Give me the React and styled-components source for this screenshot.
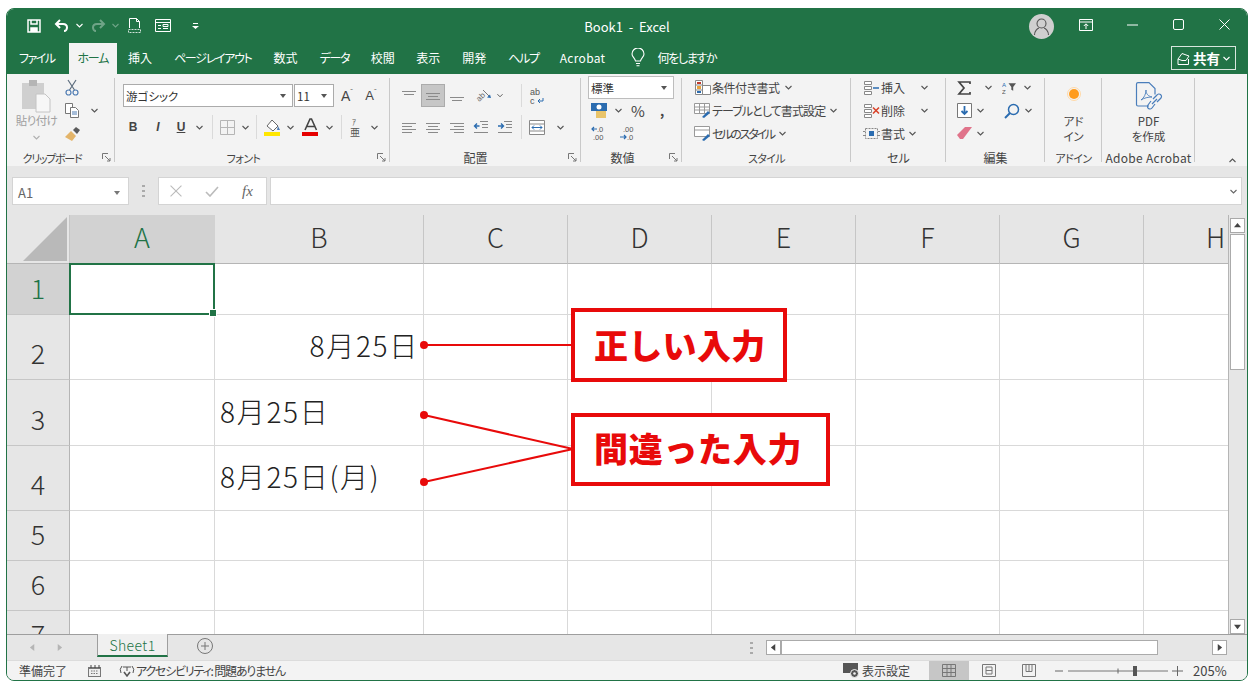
import React from 'react'
import styled, { createGlobalStyle } from 'styled-components'

const GREEN = '#217346'
const RED = '#e80a0a'

const Global = createGlobalStyle`
  html, body { margin: 0; padding: 0; background: #fff; }
  body {
    font-family: "Noto Sans CJK JP", "Liberation Sans", sans-serif;
    font-feature-settings: "palt";
    color: #444;
    overflow: hidden;
  }
  * { box-sizing: border-box; }
`

const Window = styled.div`
  margin: 8px 0 0 6px;
  width: 1242px;
  height: 673px;
  border: 1px solid ${GREEN};
  border-radius: 8px;
  overflow: hidden;
  display: flex;
  flex-direction: column;
  background: #e6e6e6;
`

/* title bar */
const TitleBar = styled.div`
  height: 33px;
  flex: none;
  background: ${GREEN};
  display: flex;
  align-items: center;
  color: #fff;
  position: relative;
`
const Qat = styled.div`
  display: flex;
  align-items: center;
  padding-left: 19px;
`
const QatBtn = styled.span`
  width: ${p => p.$w}px;
  margin-left: ${p => p.$ml ?? 0}px;
  display: flex;
  justify-content: center;
  align-items: center;
  opacity: ${p => (p.$dim ? 0.35 : 1)};
`
const Title = styled.div`
  position: absolute;
  left: 0;
  right: 0;
  top: 9px;
  text-align: center;
  font-size: 13px;
  line-height: 18px;
  white-space: pre;
`
const WinControls = styled.div`
  margin-left: auto;
  display: flex;
  align-items: center;
`
const Avatar = styled.span`
  width: 25px;
  height: 25px;
  border-radius: 50%;
  background: #cfcfcf;
  display: flex;
  align-items: center;
  justify-content: center;
  margin-right: 9px;
  margin-top: 2px;
`
const WinBtn = styled.span`
  width: 46px;
  display: flex;
  justify-content: center;
  margin-top: -2px;
`

/* tabs */
const TabRow = styled.div`
  height: 32px;
  flex: none;
  background: ${GREEN};
  display: flex;
  align-items: flex-end;
  padding-left: 1px;
  position: relative;
`
const Tab = styled.div`
  height: 31px;
  padding: 0 ${p => p.$pad ?? 11}px 2px;
  display: flex;
  align-items: center;
  font-size: 12px;
  letter-spacing: ${p => p.$ls ?? 0}px;
  white-space: nowrap;
  color: ${p => (p.$active ? GREEN : '#fff')};
  background: ${p => (p.$active ? '#f3f3f3' : 'transparent')};
  margin-left: ${p => p.$ml ?? 0}px;
`
const TellMe = styled.div`
  display: flex;
  align-items: center;
  gap: 12px;
  color: #fff;
  font-size: 12px;
  letter-spacing: -1.3px;
  height: 31px;
  padding-bottom: 2px;
  margin-left: 16px;
`
const Share = styled.div`
  position: absolute;
  left: 1164px;
  top: 4px;
  width: 65px;
  height: 24px;
  border: 1px solid #d8e6de;
  color: #fff;
  display: flex;
  align-items: center;
  justify-content: center;
  gap: 3px;
  font-size: 13.5px;
  font-weight: 700;
`

/* ribbon */
const Ribbon = styled.div`
  height: 92px;
  flex: none;
  background: #f3f3f3;
  display: flex;
  padding-top: 2px;
  position: relative;
`
const Group = styled.div`
  width: ${p => p.$w}px;
  height: 90px;
  flex: none;
  display: flex;
  flex-direction: column;
  position: relative;
  &::after {
    content: '';
    position: absolute;
    right: 0;
    top: 2px;
    height: 84px;
    width: 1px;
    background: #c9c9c9;
  }
`
const GroupBody = styled.div`
  height: 75px;
  display: flex;
  flex-direction: ${p => (p.$row ? 'row' : 'column')};
  padding-left: ${p => p.$pl ?? 0}px;
  padding-top: ${p => p.$pt ?? 0}px;
`
const GroupLabel = styled.div`
  height: 14px;
  line-height: 14px;
  font-size: ${p => p.$fs ?? 12}px;
  letter-spacing: ${p => p.$ls ?? 0}px;
  text-align: center;
  color: #444;
  padding-right: ${p => p.$pr ?? 0}px;
  white-space: nowrap;
`
const Launcher = styled.span`
  position: absolute;
  right: 4px;
  bottom: 4px;
  display: flex;
`
const Row = styled.div`
  height: ${p => p.$h ?? 23}px;
  display: flex;
  align-items: center;
  margin-top: ${p => p.$mt ?? 0}px;
`
const Slot = styled.span`
  width: ${p => p.$w}px;
  height: ${p => (p.$h ? p.$h + 'px' : 'auto')};
  margin-left: ${p => p.$ml ?? 0}px;
  flex: none;
  display: flex;
  align-items: center;
  justify-content: center;
  font-size: ${p => p.$fs ?? 12}px;
  font-weight: ${p => p.$fw ?? 400};
  font-style: ${p => (p.$it ? 'italic' : 'normal')};
  text-decoration: ${p => (p.$un ? 'underline' : 'none')};
  font-family: ${p => (p.$latin ? '"Liberation Sans", sans-serif' : 'inherit')};
  color: #444;
  background: ${p => (p.$on ? '#c6c6c6' : 'transparent')};
  border: ${p => (p.$on ? '1px solid #ababab' : 'none')};
`
const Caret = styled.sup`
  font-size: 8px;
  line-height: 8px;
  align-self: flex-start;
  color: #666;
`
const Divider = styled.span`
  width: ${p => p.$w}px;
  margin-left: ${p => p.$ml ?? 0}px;
  flex: none;
  align-self: stretch;
  display: flex;
  justify-content: center;
  &::before { content: ''; width: 1px; background: #dadada; }
`
const Select = styled.div`
  width: ${p => p.$w}px;
  height: 23px;
  flex: none;
  background: #fff;
  border: 1px solid ${p => (p.$strong ? '#bdbdbd' : '#ababab')};
  display: flex;
  align-items: center;
  justify-content: space-between;
  padding: 0 6px 0 2px;
  font-size: 11.5px;
  color: #333;
  margin-right: ${p => p.$mr ?? 0}px;
`
const ListRow = styled.div`
  height: 23px;
  display: flex;
  align-items: center;
  font-size: 12px;
  letter-spacing: ${p => p.$ls ?? 0}px;
  white-space: nowrap;
  color: #444;
`
const ListIcon = styled.span`
  width: 19px;
  display: flex;
  justify-content: center;
  flex: none;
`
const ListGap = styled.span`
  margin-left: ${p => p.$w ?? 5}px;
  display: flex;
`
const PasteCol = styled.div`
  width: 49px;
  display: flex;
  flex-direction: column;
  align-items: center;
  padding-top: 4px;
  font-size: 11.5px;
  letter-spacing: -0.6px;
  color: #a0a0a0;
  line-height: 14px;
`
const PasteLabel = styled.span`
  margin-top: -1px;
  margin-bottom: 8px;
`
const SmallCol = styled.div`
  width: 24px;
  display: flex;
  flex-direction: column;
`
const BigButton = styled.div`
  flex: 1;
  display: flex;
  flex-direction: column;
  align-items: center;
  padding-top: ${p => p.$pt}px;
  font-size: 11.5px;
  line-height: 15px;
  color: #444;
  text-align: center;
`
const BigIcon = styled.span`
  height: ${p => p.$h}px;
  margin-bottom: ${p => p.$mb}px;
  display: flex;
  align-items: center;
`
const Collapse = styled.span`
  position: absolute;
  left: 1222px;
  top: 84px;
  display: flex;
`

/* formula bar */
const FormulaBar = styled.div`
  height: 49px;
  flex: none;
  background: #e6e6e6;
  padding: 11px 5px 10px 5px;
  display: flex;
  align-items: stretch;
`
const NameBox = styled.div`
  width: 117px;
  background: #fff;
  border: 1px solid #d4d4d4;
  display: flex;
  align-items: center;
  justify-content: space-between;
  padding: 3px 8px 0 5px;
  font-size: 13px;
  color: #666;
`
const Grip = styled.div`
  width: 29px;
  display: flex;
  justify-content: center;
  align-items: center;
`
const FxBox = styled.div`
  width: 109px;
  background: #fff;
  border: 1px solid #d4d4d4;
  display: flex;
  align-items: center;
  gap: 23px;
  padding-left: 11px;
  margin-right: 3px;
  font-family: "Liberation Serif", serif;
  font-style: italic;
  font-size: 15px;
  color: #666;
`
const Input = styled.div`
  flex: 1;
  background: #fff;
  border: 1px solid #d4d4d4;
  display: flex;
  align-items: center;
  justify-content: flex-end;
  padding-right: 4px;
`

/* sheet */
const SheetArea = styled.div`
  height: 419px;
  flex: none;
  display: flex;
  background: #fff;
`
const Sheet = styled.div`
  width: 1221px;
  position: relative;
  overflow: hidden;
  flex: none;
`
const CellGrid = styled.div`
  display: grid;
  grid-template-columns: 63px 145px 209px repeat(6, 144px);
  grid-template-rows: 49px 51px 65px 66px 65px 50px 50px 50px;
  font-size: 27px;
`
const Corner = styled.div`
  background: #e6e6e6;
  border-right: 1px solid #c6c6c6;
  border-bottom: 1px solid #b5b5b5;
  display: flex;
  align-items: flex-end;
  justify-content: flex-end;
  padding: 0 2px 2px 0;
`
const ColHead = styled.div`
  background: ${p => (p.$on ? '#d2d2d2' : '#e6e6e6')};
  color: ${p => (p.$on ? GREEN : '#333')};
  border-right: 1px solid ${p => (p.$on ? '#d2d2d2' : '#c6c6c6')};
  border-bottom: 1px solid ${p => (p.$on ? GREEN : '#b5b5b5')};
  display: flex;
  align-items: center;
  justify-content: center;
  font-weight: 300;
  padding-bottom: 6px;
`
const RowHead = styled.div`
  background: ${p => (p.$on ? '#d2d2d2' : '#e6e6e6')};
  color: ${p => (p.$on ? GREEN : '#333')};
  border-right: 1px solid #b5b5b5;
  border-bottom: 1px solid #c6c6c6;
  display: flex;
  align-items: center;
  justify-content: center;
  font-weight: 300;
  padding-top: ${p => (p.$tall ? 11 : 0)}px;
  padding-bottom: ${p => (p.$tall ? 0 : 4)}px;
`
const Cell = styled.div`
  border-right: 1px solid #d9d9d9;
  border-bottom: 1px solid #d9d9d9;
  display: flex;
  align-items: center;
  justify-content: ${p => (p.$right ? 'flex-end' : 'flex-start')};
  padding: 0 4px 4px 5px;
  font-size: 28px;
  font-weight: 300;
  letter-spacing: 1.7px;
  font-feature-settings: normal;
  color: #222;
  white-space: nowrap;
  position: relative;
`
const Selected = styled.div`
  position: absolute;
  left: -1px;
  top: -1px;
  right: -1px;
  bottom: -1px;
  border: 2px solid ${GREEN};
  z-index: 2;
  &::after {
    content: '';
    position: absolute;
    right: -4px;
    bottom: -4px;
    width: 6px;
    height: 6px;
    background: ${GREEN};
    border: 1px solid #fff;
  }
`
const Leader = styled.svg`
  position: absolute;
  left: 0;
  top: 0;
  z-index: 3;
`
const Callout = styled.div`
  position: absolute;
  left: 564px;
  top: ${p => p.$top}px;
  width: ${p => p.$w}px;
  height: ${p => p.$h}px;
  background: #fff;
  border: 4px solid ${RED};
  z-index: 4;
  display: flex;
  align-items: center;
  padding: 0 0 ${p => p.$pb}px 19px;
  color: ${RED};
  font-size: 34px;
  font-weight: 900;
  letter-spacing: ${p => p.$ls}px;
  font-feature-settings: normal;
  white-space: nowrap;
`

const VScroll = styled.div`
  width: 19px;
  flex: none;
  background: #e6e6e6;
  border-left: 1px solid #b5b5b5;
  padding: 3px 2px 0 1px;
  display: flex;
  flex-direction: column;
  justify-content: flex-start;
`
const ScrollBtn = styled.div`
  width: 15px;
  height: 15px;
  flex: none;
  background: #fff;
  border: 1px solid #a9a9a9;
  display: flex;
  align-items: center;
  justify-content: center;
  margin-top: ${p => p.$mt ?? 0}px;
`
const VThumb = styled.div`
  height: 136px;
  width: 15px;
  margin-top: 1px;
  background: #fff;
  border: 1px solid #ababab;
`

/* sheet tabs */
const SheetTabs = styled.div`
  height: 26px;
  flex: none;
  background: #e6e6e6;
  border-top: 1px solid #9e9e9e;
  display: flex;
  align-items: flex-start;
  position: relative;
`
const Nav = styled.div`
  width: 90px;
  height: 25px;
  display: flex;
  align-items: center;
  padding-left: 22px;
  gap: 20px;
`
const SheetTab = styled.div`
  width: 71px;
  height: 23px;
  margin-top: -1px;
  background: #f0f0f0;
  border-left: 1px solid #9e9e9e;
  border-right: 1px solid #9e9e9e;
  border-bottom: 2px solid ${GREEN};
  color: ${GREEN};
  font-size: 14px;
  font-weight: 300;
  display: flex;
  align-items: center;
  justify-content: center;
  letter-spacing: 0.4px;
`
const AddSheet = styled.span`
  margin-left: 29px;
  margin-top: 3px;
  display: flex;
`
const HScrollWrap = styled.div`
  margin-left: auto;
  display: flex;
  align-items: center;
  height: 25px;
  padding-right: 20px;
`
const HTrack = styled.div`
  width: 431px;
  height: 15px;
  background: #e6e6e6;
  display: flex;
`
const HThumb = styled.div`
  width: 377px;
  height: 15px;
  background: #fff;
  border: 1px solid #ababab;
`
const HGrip = styled.span`
  display: flex;
  margin-right: 13px;
`

/* status bar */
const StatusBar = styled.div`
  flex: 1;
  background: #f3f3f3;
  display: flex;
  align-items: center;
  font-size: 12px;
  color: #444;
  border-top: 1px solid #dcdcdc;
  white-space: nowrap;
`
const StatusText = styled.span`
  margin-left: ${p => p.$ml}px;
  letter-spacing: ${p => p.$ls ?? 0}px;
  display: flex;
  align-items: center;
`
const StatusRight = styled.div`
  margin-left: auto;
  display: flex;
  align-items: stretch;
  height: 100%;
`
const ViewBtn = styled.span`
  width: 40px;
  background: ${p => (p.$on ? '#c6c6c6' : 'transparent')};
  display: flex;
  align-items: center;
  justify-content: center;
`
const DisplaySet = styled.span`
  display: flex;
  align-items: center;
  gap: 2px;
  margin-right: 19px;
`
const Zoom = styled.div`
  display: flex;
  align-items: center;
  padding-left: 6px;
  padding-right: 20px;
`
const Pct = styled.span`
  width: 34px;
  margin-left: 9px;
  font-size: 13px;
`

/* icons */
const Chev = ({ c = '#555', up }) => (
  <svg width="7" height="5" viewBox="0 0 7 5">
    <path d={up ? 'M.5 4 3.5 1 6.5 4' : 'M.5 1 3.5 4 6.5 1'} fill="none" stroke={c} strokeWidth="1.1" />
  </svg>
)
const Tri = ({ c = '#555' }) => (
  <svg width="6" height="4" viewBox="0 0 6 4"><path d="M0 0H6L3 4Z" fill={c} /></svg>
)
const LaunchIcon = () => (
  <svg width="9" height="9" viewBox="0 0 9 9" fill="none" stroke="#777">
    <path d="M.5 6V.5H6" /><path d="M3 3 8 8M8 5V8H5" />
  </svg>
)
const Lines = ({ rows, align = 'c' }) => (
  <svg width="16" height="14" viewBox="0 0 16 14" stroke="#8a8a8a">
    {rows.map((r, i) => {
      const w = i % 2 === 0 ? 14 : 10
      const x = align === 'l' ? 1 : align === 'r' ? 15 - w : 8 - w / 2
      return <path key={i} d={`M${x} ${r}.5h${w}`} />
    })}
  </svg>
)
const IndentIcon = ({ right }) => (
  <svg width="16" height="14" viewBox="0 0 16 14" fill="none">
    <path d="M7 1.500h8M9 4.500h6M9 7.500h6M1 12.500h14" stroke="#888" />
    <path d={right ? 'M1 6h5M4 3.500 6.500 6 4 8.500' : 'M6.500 6h-5M4 3.500 1.500 6 4 8.500'} stroke="#2b6cb0" strokeWidth="1.400" />
  </svg>
)
const SaveIcon = () => (
  <svg width="14" height="14" viewBox="0 0 14 14" fill="none" stroke="#fff" strokeWidth="1.500">
    <path d="M1 1h12v12H1z" /><path d="M4 1v4h6V1" /><path d="M4 13V9h6v4" fill="#fff" />
  </svg>
)
const UndoIcon = () => (
  <svg width="15" height="13" viewBox="0 0 15 13" fill="none" stroke="#fff" strokeWidth="2">
    <path d="M6 1 2 5l4 4" /><path d="M2 5h7c3 0 4 2 4 3.500S12 12 10 12" />
  </svg>
)
const RedoIcon = () => (
  <svg width="15" height="13" viewBox="0 0 15 13" fill="none" stroke="#fff" strokeWidth="2">
    <path d="M9 1l4 4-4 4" /><path d="M13 5H6C3 5 2 7 2 8.500S3 12 5 12" />
  </svg>
)
const PreviewIcon = () => (
  <svg width="13" height="15" viewBox="0 0 13 15" fill="none" stroke="#fff">
    <path d="M1.500 10V.5h7l3 3V10" /><path d="M8.500.5v3h3" /><path d="M.5 11.500h12v3H.5z" strokeWidth=".8" strokeDasharray="2 1" />
  </svg>
)
const FormIcon = () => (
  <svg width="16" height="13" viewBox="0 0 16 13" fill="none" stroke="#fff">
    <path d="M.5.5h15v12H.5z" /><path d="M.5 3.500h15M3 6.500h3M8 5.500h5v2H8zM3 9.500h3M8 9.500h5" />
  </svg>
)
const CustomIcon = () => (
  <svg width="7" height="6" viewBox="0 0 7 6" fill="#fff"><path d="M1 0h5v1H1zM0 3h7L3.500 6z" /></svg>
)
const PersonIcon = () => (
  <svg width="19" height="19" viewBox="0 0 19 19" fill="none" stroke="#555" strokeWidth="1.100">
    <circle cx="9.500" cy="6.500" r="4.500" /><path d="M2.500 18c0-4 3-6.500 4.500-7M16.500 18c0-4-3-6.500-4.500-7" />
  </svg>
)
const DisplayIcon = () => (
  <svg width="14" height="12" viewBox="0 0 14 12" fill="none" stroke="#fff">
    <path d="M.5.5h13v11H.5zM.5 3h13" /><path d="M7 10V5M4.800 7 7 4.800 9.200 7" />
  </svg>
)
const MinIcon = () => <svg width="11" height="2" viewBox="0 0 11 2"><path d="M0 1h11" stroke="#fff" /></svg>
const MaxIcon = () => (
  <svg width="11" height="11" viewBox="0 0 11 11"><rect x=".5" y=".5" width="10" height="10" rx="1.500" fill="none" stroke="#fff" /></svg>
)
const CloseIcon = ({ c = '#fff', s = 11 }) => (
  <svg width={s} height={s} viewBox="0 0 11 11"><path d="M.5.5l10 10M10.500.5l-10 10" stroke={c} strokeWidth="1" /></svg>
)
const BulbIcon = () => (
  <svg width="14" height="19" viewBox="0 0 14 19" fill="none" stroke="#fff" strokeWidth="1.100">
    <path d="M4.500 13C4 10 1 9 1 6a6 6 0 0 1 12 0c0 3-3 4-3.500 7z" /><path d="M5 15.500h4M5.500 17.800h3" />
  </svg>
)
const ShareIcon = () => (
  <svg width="13" height="13" viewBox="0 0 13 13" fill="none" stroke="#fff">
    <path d="M1 7v5.500h10.500V7" /><path d="M1 7 5 1.500l7 2.500-3 4.500H5z" />
  </svg>
)
const PasteIcon = () => (
  <svg width="30" height="34" viewBox="0 0 30 34">
    <rect x="0" y="3" width="22" height="26" fill="#cfcfcf" />
    <rect x="7" y="0" width="8" height="6" fill="#b5b5b5" />
    <path d="M14 14h9l5 5v13H14z" fill="#f7f7f7" stroke="#c4c4c4" />
  </svg>
)
const CutIcon = () => (
  <svg width="14" height="17" viewBox="0 0 14 17" fill="none" stroke="#5d6d7e" strokeWidth="1.200">
    <circle cx="3.500" cy="13.500" r="2.500" stroke="#4f7cb3" /><circle cx="10.500" cy="13.500" r="2.500" stroke="#4f7cb3" />
    <path d="M4.500 11 11 1M9.500 11 3 1" />
  </svg>
)
const CopyIcon = () => (
  <svg width="14" height="15" viewBox="0 0 14 15" fill="#fff" stroke="#777">
    <path d="M.5.5h7v10h-7z" /><path d="M5.500 4.500h5l3 3v7h-8z" /><path d="M7 9h5M7 11h5" stroke="#4f7cb3" />
  </svg>
)
const PainterIcon = () => (
  <svg width="15" height="14" viewBox="0 0 15 14">
    <path d="M0 10 6 4l5 5-4 5z" fill="#e3b469" /><path d="M8 3l3-3 4 3-3 4z" fill="#5a5a5a" />
  </svg>
)
const BorderIcon = () => (
  <svg width="15" height="15" viewBox="0 0 15 15" fill="none" stroke="#b5b5b5">
    <path d="M.5.5h14v14H.5zM7.500.5v14M.5 7.500h14" />
  </svg>
)
const FillIcon = () => (
  <svg width="17" height="18" viewBox="0 0 17 18">
    <path d="M3 8 8 2l6 6-5 5z" fill="#fff" stroke="#666" /><path d="M14 8l2 4h-3z" fill="#4f7cb3" />
    <rect y="14" width="16" height="4" fill="#ffe600" />
  </svg>
)
const FontColorIcon = () => (
  <svg width="17" height="18" viewBox="0 0 17 18">
    <path d="M3 12 8 1h1.500l5 11M5 8.500h7.500" fill="none" stroke="#444" strokeWidth="1.600" />
    <rect y="14" width="16" height="4" fill="#e60000" />
  </svg>
)
const PhoneticIcon = () => (
  <svg width="12" height="20" viewBox="0 0 12 20" fill="#555">
    <text x="3" y="8" fontSize="8">ｱ</text>
    <text x="1" y="19" fontSize="10">亜</text>
  </svg>
)
const OrientIcon = () => (
  <svg width="20" height="18" viewBox="0 0 20 18">
    <text x="3" y="13" fontSize="8" fill="#666" transform="rotate(-45 7 10)" fontFamily="Liberation Sans">ab</text>
    <path d="M10 3l6 6" stroke="#777" fill="none" />
    <path d="M18 11l-4-.5 3-3z" fill="#2b6cb0" />
  </svg>
)
const WrapIcon = () => (
  <svg width="16" height="18" viewBox="0 0 16 18">
    <text x="1" y="8" fontSize="9" fill="#555" fontFamily="Liberation Sans">ab</text>
    <text x="1" y="17" fontSize="9" fill="#555" fontFamily="Liberation Sans">c</text>
    <path d="M14 11v3H9M11 12l-2 2 2 2" fill="none" stroke="#2b6cb0" />
  </svg>
)
const MergeIcon = () => (
  <svg width="16" height="15" viewBox="0 0 16 15" fill="#fff" stroke="#888">
    <path d="M.5.5h15v14H.5zM.5 4h15M.5 11h15" /><path d="M3 7.500h10M5 5.500l-2 2 2 2M11 5.500l2 2-2 2" fill="none" stroke="#2b6cb0" />
  </svg>
)
const CurrencyIcon = () => (
  <svg width="16" height="15" viewBox="0 0 16 15">
    <rect width="16" height="8" fill="#2b6cb0" /><circle cx="8" cy="4" r="2.500" fill="#fff" />
    <rect x="5" y="8" width="10" height="7" fill="#e9c46a" />
  </svg>
)
const DecimalIcon = ({ more }) => (
  <svg width="16" height="15" viewBox="0 0 16 15" fontFamily="Liberation Sans" fontSize="7.500" fill="#555">
    <text x={more ? 4 : 6} y="6">{more ? '.00' : '.0'}</text>
    <text x={more ? 8 : 2} y="14">{more ? '.0' : '.00'}</text>
    <path d={more ? 'M1 11h6M5 9l2 2-2 2' : 'M6 3H1M3 1 1 3l2 2'} fill="none" stroke="#2b6cb0" strokeWidth="1.200" />
  </svg>
)
const CondIcon = () => (
  <svg width="16" height="15" viewBox="0 0 16 15" fill="#fff" stroke="#888">
    <path d="M.5.5h7v14h-7zM.5 5h7M.5 10h7M7.500 5.500h8v9h-8z" />
    <rect x="2" y="2" width="4" height="2" fill="#c0392b" stroke="none" />
    <rect x="2" y="6" width="4" height="3" fill="#e9a23b" stroke="none" />
    <rect x="2" y="11" width="4" height="2" fill="#2b6cb0" stroke="none" />
  </svg>
)
const TableIcon = () => (
  <svg width="17" height="15" viewBox="0 0 17 15" fill="#fff" stroke="#999">
    <path d="M.5.5h15v10H.5zM.5 4h15M.5 7h15M5.500.5v10M10.500.5v10" />
    <path d="M8 14l6-6 2 2-6 5z" fill="#2b6cb0" stroke="none" />
  </svg>
)
const CellStyleIcon = () => (
  <svg width="17" height="15" viewBox="0 0 17 15" fill="#fff" stroke="#999">
    <path d="M.5.5h15v10H.5zM.5 4h15" />
    <path d="M8 14l6-6 2 2-6 5z" fill="#2b6cb0" stroke="none" />
  </svg>
)
const InsertIcon = ({ del }) => (
  <svg width="17" height="14" viewBox="0 0 17 14" fill="#fff" stroke="#888">
    <path d="M1.500.5h7v3h-7zM1.500 5.500h7v3h-7zM1.500 10.500h7v3h-7z" />
    {del
      ? <path d="M10 3.500l6 6M16 3.500l-6 6" stroke="#d9442b" strokeWidth="1.600" fill="none" />
      : <path d="M10 7h6" stroke="#2b6cb0" strokeWidth="1.400" fill="none" />}
  </svg>
)
const FormatIcon = () => (
  <svg width="17" height="15" viewBox="0 0 17 15" fill="none" stroke="#888">
    <path d="M2.500 2.500h12v10h-12z" strokeDasharray="2 1" /><rect x="6" y="5" width="5" height="5" fill="#2b6cb0" stroke="none" />
    <path d="M0 5.500h2M0 9.500h2M15 5.500h2M15 9.500h2" />
  </svg>
)
const SigmaIcon = () => (
  <svg width="14" height="14" viewBox="0 0 14 14" fill="none" stroke="#444" strokeWidth="1.700">
    <path d="M13 3V1H2l5 6-5 6h11v-2" />
  </svg>
)
const SortIcon = () => (
  <svg width="15" height="14" viewBox="0 0 15 14">
    <text x="0" y="6" fontSize="6.500" fill="#2b6cb0" fontFamily="Liberation Sans">A</text>
    <text x="0" y="13" fontSize="6.500" fill="#555" fontFamily="Liberation Sans">Z</text>
    <path d="M7 2h8l-3 4v4l-2-1V6z" fill="#555" />
  </svg>
)
const DownIcon = () => (
  <svg width="15" height="15" viewBox="0 0 15 15">
    <path d="M.5.500h14v14H.5z" fill="#fff" stroke="#777" />
    <path d="M7.500 3v8M4.500 8l3 3 3-3" fill="none" stroke="#2b6cb0" strokeWidth="1.800" />
  </svg>
)
const SearchIcon = () => (
  <svg width="16" height="16" viewBox="0 0 16 16" fill="none" stroke="#2b6cb0" strokeWidth="1.500">
    <circle cx="9.500" cy="6.500" r="5" /><path d="M6 10l-5 5" strokeWidth="2" />
  </svg>
)
const EraserIcon = () => (
  <svg width="15" height="13" viewBox="0 0 15 13"><path d="M0 8 8 0h7L6 12H3z" fill="#e0738a" /></svg>
)
const AddinDot = () => (
  <svg width="14" height="14" viewBox="0 0 14 14"><circle cx="7" cy="7" r="5" fill="#ff9b1c" /><circle cx="7" cy="7" r="6.500" fill="none" stroke="#ffd9a8" /></svg>
)
const PdfIcon = () => (
  <svg width="28" height="29" viewBox="0 0 28 29" fill="none" stroke="#4a7ebb" strokeWidth="1.200">
    <path d="M14 24H3a1.500 1.500 0 0 1-1.500-1.500V2A1.500 1.500 0 0 1 3 .6h11l6 6v6" />
    <path d="M6 18c3-2 5-6 5-10 0 4 2 6 6 7-4 0-8 1-11 3z" strokeWidth=".9" />
    <path d="M18 17l4-4a2.500 2.500 0 0 1 4 3l-4 4M20 22l-3 4a2.500 2.500 0 0 1-4-3l3-4M17 22l5-5" />
  </svg>
)
const CheckIcon = () => (
  <svg width="14" height="11" viewBox="0 0 14 11"><path d="M1 6l4 4 8-9" fill="none" stroke="#bbb" strokeWidth="1.600" /></svg>
)
const Dots = () => (
  <svg width="3" height="12" viewBox="0 0 3 12" fill="#aaa"><rect width="3" height="2" /><rect y="5" width="3" height="2" /><rect y="10" width="3" height="2" /></svg>
)
const CornerTri = () => (
  <svg width="44" height="44" viewBox="0 0 44 44"><path d="M44 0V44H0Z" fill="#b9b9b9" /></svg>
)
const ArrowTri = ({ dir, c = '#444', s = 7 }) => {
  const d = { up: 'M0 6 4 1 8 6Z', down: 'M0 2H8L4 7Z', left: 'M6 0V8L1 4Z', right: 'M2 0V8L7 4Z' }[dir]
  return <svg width={s} height={s} viewBox="0 0 8 8"><path d={d} fill={c} /></svg>
}
const PlusCircle = () => (
  <svg width="16" height="16" viewBox="0 0 16 16" fill="none" stroke="#777">
    <circle cx="8" cy="8" r="7.500" /><path d="M8 4v8M4 8h8" />
  </svg>
)
const MacroIcon = () => (
  <svg width="13" height="12" viewBox="0 0 13 12">
    <rect y="2" width="13" height="10" fill="#777" /><rect x="1" y="4" width="11" height="7" fill="#eee" />
    <path d="M3 0v3M7 0v3M11 0v3" stroke="#444" /><path d="M3 6h7M3 8.500h7" stroke="#777" strokeDasharray="1.500 1" />
  </svg>
)
const A11yIcon = () => (
  <svg width="16" height="15" viewBox="0 0 16 15" fill="none" stroke="#555">
    <path d="M2 10A6 6 0 0 1 3 3M14 10a6 6 0 0 0-1-7" /><path d="M4 4h8M8 4v4" />
    <path d="M5 9l3 4 3-4" strokeWidth="1.600" />
  </svg>
)
const DisplayCfg = () => (
  <svg width="17" height="15" viewBox="0 0 17 15">
    <rect width="15" height="10" fill="#555" /><circle cx="11.500" cy="10.500" r="4" fill="#555" stroke="#f3f3f3" /><circle cx="11.500" cy="10.500" r="1.300" fill="#f3f3f3" />
  </svg>
)
const NormalView = () => (
  <svg width="14" height="13" viewBox="0 0 14 13" fill="none" stroke="#777">
    <path d="M.5.500h13v12H.5zM.5 4.500h13M.5 8.500h13M5 .5v12M9 .5v12" />
  </svg>
)
const PageView = () => (
  <svg width="14" height="13" viewBox="0 0 14 13" fill="none" stroke="#777">
    <path d="M.5.500h13v12H.5z" /><path d="M4 3h6v7H4zM4 6.500h6" />
  </svg>
)
const BreakView = () => (
  <svg width="14" height="13" viewBox="0 0 14 13" fill="none" stroke="#777">
    <path d="M.5.500h13v12H.5z" /><path d="M4 .5v7h6v-7M7 .5v7" />
  </svg>
)
const ZoomSlider = () => (
  <svg width="129" height="12" viewBox="0 0 129 12">
    <path d="M0 6h8M117 6h11M122.500 1v10" stroke="#666" />
    <path d="M13 6h100" stroke="#777" />
    <path d="M63 3.500v5" stroke="#666" />
    <rect x="78" y="1" width="4" height="10" fill="#555" />
  </svg>
)

const colLetters = ['A', 'B', 'C', 'D', 'E', 'F', 'G', 'H']
const rows = [
  { n: 1, on: true },
  { n: 2, tall: true, b: '8月25日', right: true },
  { n: 3, tall: true, b: '8月25日' },
  { n: 4, tall: true, b: '8月25日(月)' },
  { n: 5 },
  { n: 6 },
  { n: 7 },
]

const ClipboardGroup = () => (
  <Group $w={108}>
    <GroupBody $row $pl={5}>
      <PasteCol>
        <PasteIcon />
        <PasteLabel>貼り付け</PasteLabel>
        <Chev c="#b0b0b0" />
      </PasteCol>
      <SmallCol>
        <Row><Slot $w={22}><CutIcon /></Slot></Row>
        <Row><Slot $w={22}><CopyIcon /></Slot><Slot $w={22}><Chev /></Slot></Row>
        <Row><Slot $w={22}><PainterIcon /></Slot></Row>
      </SmallCol>
    </GroupBody>
    <GroupLabel $pr={18} $fs={11} $ls={-1.3}>クリップボード<Launcher><LaunchIcon /></Launcher></GroupLabel>
  </Group>
)

const FontGroup = () => (
  <Group $w={275}>
    <GroupBody $pl={8} $pt={8}>
      <Row>
        <Select $w={170} $mr={1}>游ゴシック<Tri /></Select>
        <Select $w={40}>11<Tri /></Select>
        <Slot $w={26} $fs={14} $latin>A<Caret>ˆ</Caret></Slot>
        <Slot $w={22} $fs={13} $latin>A<Caret>ˇ</Caret></Slot>
      </Row>
      <Row $mt={8} $h={24}>
        <Slot $w={20} $fw={700} $latin>B</Slot>
        <Slot $w={30} $fw={700} $it $latin>I</Slot>
        <Slot $w={16} $fw={700} $un $latin>U</Slot>
        <Slot $w={20}><Chev /></Slot>
        <Divider $w={6} />
        <Slot $w={24}><BorderIcon /></Slot>
        <Slot $w={12}><Chev /></Slot>
        <Divider $w={10} />
        <Slot $w={22}><FillIcon /></Slot>
        <Slot $w={14}><Chev /></Slot>
        <Slot $w={26}><FontColorIcon /></Slot>
        <Slot $w={12}><Chev /></Slot>
        <Divider $w={12} />
        <Slot $w={16}><PhoneticIcon /></Slot>
        <Slot $w={22}><Chev /></Slot>
      </Row>
    </GroupBody>
    <GroupLabel $pr={18} $fs={11} $ls={-0.6}>フォント<Launcher><LaunchIcon /></Launcher></GroupLabel>
  </Group>
)

const AlignGroup = () => (
  <Group $w={191}>
    <GroupBody $pl={7} $pt={8}>
      <Row>
        <Slot $w={24}><Lines rows={[2, 5]} /></Slot>
        <Slot $w={24} $h={23} $on><Lines rows={[4, 7, 10]} /></Slot>
        <Slot $w={24}><Lines rows={[8, 11]} /></Slot>
        <Slot $w={28}><OrientIcon /></Slot>
        <Slot $w={6}><Chev /></Slot>
        <Divider $w={6} $ml={15} />
        <Slot $w={26}><WrapIcon /></Slot>
      </Row>
      <Row $mt={8} $h={24}>
        <Slot $w={24}><Lines rows={[3, 6, 9, 12]} align="l" /></Slot>
        <Slot $w={24}><Lines rows={[3, 6, 9, 12]} /></Slot>
        <Slot $w={24}><Lines rows={[3, 6, 9, 12]} align="r" /></Slot>
        <Slot $w={24}><IndentIcon /></Slot>
        <Slot $w={24}><IndentIcon right /></Slot>
        <Divider $w={6} $ml={1} />
        <Slot $w={26}><MergeIcon /></Slot>
        <Slot $w={20}><Chev /></Slot>
      </Row>
    </GroupBody>
    <GroupLabel $pr={20}>配置<Launcher><LaunchIcon /></Launcher></GroupLabel>
  </Group>
)

const NumberGroup = () => (
  <Group $w={101}>
    <GroupBody $pl={7}>
      <Select $w={86} $strong>標準<Tri /></Select>
      <Row>
        <Slot $w={22}><CurrencyIcon /></Slot>
        <Slot $w={16}><Chev /></Slot>
        <Slot $w={24} $fs={15}>%</Slot>
        <Slot $w={24} $fw={700} $fs={13}>,</Slot>
      </Row>
      <Row>
        <Slot $w={22}><DecimalIcon /></Slot>
        <Slot $w={34}><DecimalIcon more /></Slot>
      </Row>
    </GroupBody>
    <GroupLabel $pr={18}>数値<Launcher><LaunchIcon /></Launcher></GroupLabel>
  </Group>
)

const StyleGroup = () => (
  <Group $w={169}>
    <GroupBody $pl={11}>
      <ListRow $ls={-0.5}><ListIcon><CondIcon /></ListIcon>条件付き書式<ListGap><Chev /></ListGap></ListRow>
      <ListRow $ls={-0.9}><ListIcon><TableIcon /></ListIcon>テーブルとして書式設定<ListGap><Chev /></ListGap></ListRow>
      <ListRow $ls={-2.2}><ListIcon><CellStyleIcon /></ListIcon>セルのスタイル<ListGap><Chev /></ListGap></ListRow>
    </GroupBody>
    <GroupLabel $fs={11} $ls={-0.6}>スタイル</GroupLabel>
  </Group>
)

const CellsGroup = () => (
  <Group $w={95}>
    <GroupBody $pl={11}>
      <ListRow><ListIcon><InsertIcon /></ListIcon>挿入<ListGap $w={16}><Chev /></ListGap></ListRow>
      <ListRow><ListIcon><InsertIcon del /></ListIcon>削除<ListGap $w={16}><Chev /></ListGap></ListRow>
      <ListRow><ListIcon><FormatIcon /></ListIcon>書式<ListGap $w={4}><Chev /></ListGap></ListRow>
    </GroupBody>
    <GroupLabel>セル</GroupLabel>
  </Group>
)

const EditGroup = () => (
  <Group $w={99}>
    <GroupBody $pl={8}>
      <Row>
        <Slot $w={20}><SigmaIcon /></Slot>
        <Slot $w={28}><Chev /></Slot>
        <Slot $w={14}><SortIcon /></Slot>
        <Slot $w={22}><Chev /></Slot>
      </Row>
      <Row>
        <Slot $w={20}><DownIcon /></Slot>
        <Slot $w={12}><Chev /></Slot>
        <Slot $w={26} $ml={13}><SearchIcon /></Slot>
        <Chev />
      </Row>
      <Row>
        <Slot $w={20}><EraserIcon /></Slot>
        <Slot $w={12}><Chev /></Slot>
      </Row>
    </GroupBody>
    <GroupLabel>編集</GroupLabel>
  </Group>
)

const AddinGroup = () => (
  <Group $w={57}>
    <GroupBody>
      <BigButton $pt={9}>
        <BigIcon $h={18} $mb={11}><AddinDot /></BigIcon>
        <span>アド</span>
        <span>イン</span>
      </BigButton>
    </GroupBody>
    <GroupLabel $fs={11} $ls={-0.6}>アドイン</GroupLabel>
  </Group>
)

const AcrobatGroup = () => (
  <Group $w={93}>
    <GroupBody>
      <BigButton $pt={5}>
        <BigIcon $h={30} $mb={3}><PdfIcon /></BigIcon>
        <span>PDF</span>
        <span>を作成</span>
      </BigButton>
    </GroupBody>
    <GroupLabel $ls={0.3}>Adobe Acrobat</GroupLabel>
  </Group>
)

const App = () => {
  return (
    <>
      <Global />
      <Window>
        <TitleBar>
          <Qat>
            <QatBtn $w={16}><SaveIcon /></QatBtn>
            <QatBtn $w={26} $ml={6}><UndoIcon /></QatBtn>
            <QatBtn $w={10}><Chev c="#fff" /></QatBtn>
            <QatBtn $w={22} $ml={3} $dim><RedoIcon /></QatBtn>
            <QatBtn $w={12} $dim><Chev c="#fff" /></QatBtn>
            <QatBtn $w={20} $ml={3}><PreviewIcon /></QatBtn>
            <QatBtn $w={28} $ml={5}><FormIcon /></QatBtn>
            <QatBtn $w={14} $ml={11}><CustomIcon /></QatBtn>
          </Qat>
          <Title>{'Book1  -  Excel'}</Title>
          <WinControls>
            <Avatar><PersonIcon /></Avatar>
            <WinBtn><DisplayIcon /></WinBtn>
            <WinBtn><MinIcon /></WinBtn>
            <WinBtn><MaxIcon /></WinBtn>
            <WinBtn><CloseIcon /></WinBtn>
          </WinControls>
        </TitleBar>

        <TabRow>
          <Tab $ls={-1.5}>ファイル</Tab>
          <Tab $active $pad={9} $ls={-1.3} $ml={3}>ホーム</Tab>
          <Tab>挿入</Tab>
          <Tab $ls={-1.3}>ページレイアウト</Tab>
          <Tab>数式</Tab>
          <Tab $ls={-1.3}>データ</Tab>
          <Tab $pad={10.5}>校閲</Tab>
          <Tab>表示</Tab>
          <Tab>開発</Tab>
          <Tab $ls={-1.3}>ヘルプ</Tab>
          <Tab $ls={0.3} $pad={10}>Acrobat</Tab>
          <TellMe><BulbIcon />何をしますか</TellMe>
          <Share><ShareIcon />共有<Chev c="#fff" /></Share>
        </TabRow>

        <Ribbon>
          <ClipboardGroup />
          <FontGroup />
          <AlignGroup />
          <NumberGroup />
          <StyleGroup />
          <CellsGroup />
          <EditGroup />
          <AddinGroup />
          <AcrobatGroup />
          <Collapse><Chev up c="#555" /></Collapse>
        </Ribbon>

        <FormulaBar>
          <NameBox>A1<Tri c="#777" /></NameBox>
          <Grip><Dots /></Grip>
          <FxBox>
            <CloseIcon c="#bbb" s={12} />
            <CheckIcon />
            <span>fx</span>
          </FxBox>
          <Input><Chev c="#666" /></Input>
        </FormulaBar>

        <SheetArea>
          <Sheet>
            <CellGrid>
              <Corner><CornerTri /></Corner>
              {colLetters.map((c, i) => <ColHead key={c} $on={i === 0}>{c}</ColHead>)}
              {rows.map(r => (
                <React.Fragment key={r.n}>
                  <RowHead $on={r.on} $tall={r.tall}>{r.n}</RowHead>
                  {colLetters.map((c, i) => (
                    <Cell key={c} $right={r.right && i === 1}>
                      {i === 0 && r.on && <Selected />}
                      {i === 1 && r.b}
                    </Cell>
                  ))}
                </React.Fragment>
              ))}
            </CellGrid>
            <Leader width="600" height="300" viewBox="0 0 600 300">
              <path d="M417 130H566M417 200 566 234 417 267" fill="none" stroke={RED} strokeWidth="2" />
              <g fill={RED}>
                <circle cx="417" cy="130" r="4" />
                <circle cx="417" cy="200" r="4" />
                <circle cx="417" cy="267" r="4" />
              </g>
            </Leader>
            <Callout $top={93} $w={216} $h={74} $ls={0.3} $pb={2}>正しい入力</Callout>
            <Callout $top={198} $w={259} $h={73} $ls={0.7} $pb={5}>間違った入力</Callout>
          </Sheet>
          <VScroll>
            <ScrollBtn><ArrowTri dir="up" /></ScrollBtn>
            <VThumb />
            <ScrollBtn $mt={249}><ArrowTri dir="down" /></ScrollBtn>
          </VScroll>
        </SheetArea>

        <SheetTabs>
          <Nav><ArrowTri dir="left" c="#b5b5b5" /><ArrowTri dir="right" c="#b5b5b5" /></Nav>
          <SheetTab>Sheet1</SheetTab>
          <AddSheet><PlusCircle /></AddSheet>
          <HScrollWrap>
            <HGrip><Dots /></HGrip>
            <ScrollBtn><ArrowTri dir="left" /></ScrollBtn>
            <HTrack><HThumb /></HTrack>
            <ScrollBtn><ArrowTri dir="right" /></ScrollBtn>
          </HScrollWrap>
        </SheetTabs>

        <StatusBar>
          <StatusText $ml={12}>準備完了</StatusText>
          <StatusText $ml={21}><MacroIcon /></StatusText>
          <StatusText $ml={18}><A11yIcon /></StatusText>
          <StatusText $ml={1} $ls={-1.2}>アクセシビリティ: 問題ありません</StatusText>
          <StatusRight>
            <DisplaySet><DisplayCfg />表示設定</DisplaySet>
            <ViewBtn $on><NormalView /></ViewBtn>
            <ViewBtn><PageView /></ViewBtn>
            <ViewBtn><BreakView /></ViewBtn>
            <Zoom><ZoomSlider /><Pct>205%</Pct></Zoom>
          </StatusRight>
        </StatusBar>
      </Window>
    </>
  )
}

export default App
